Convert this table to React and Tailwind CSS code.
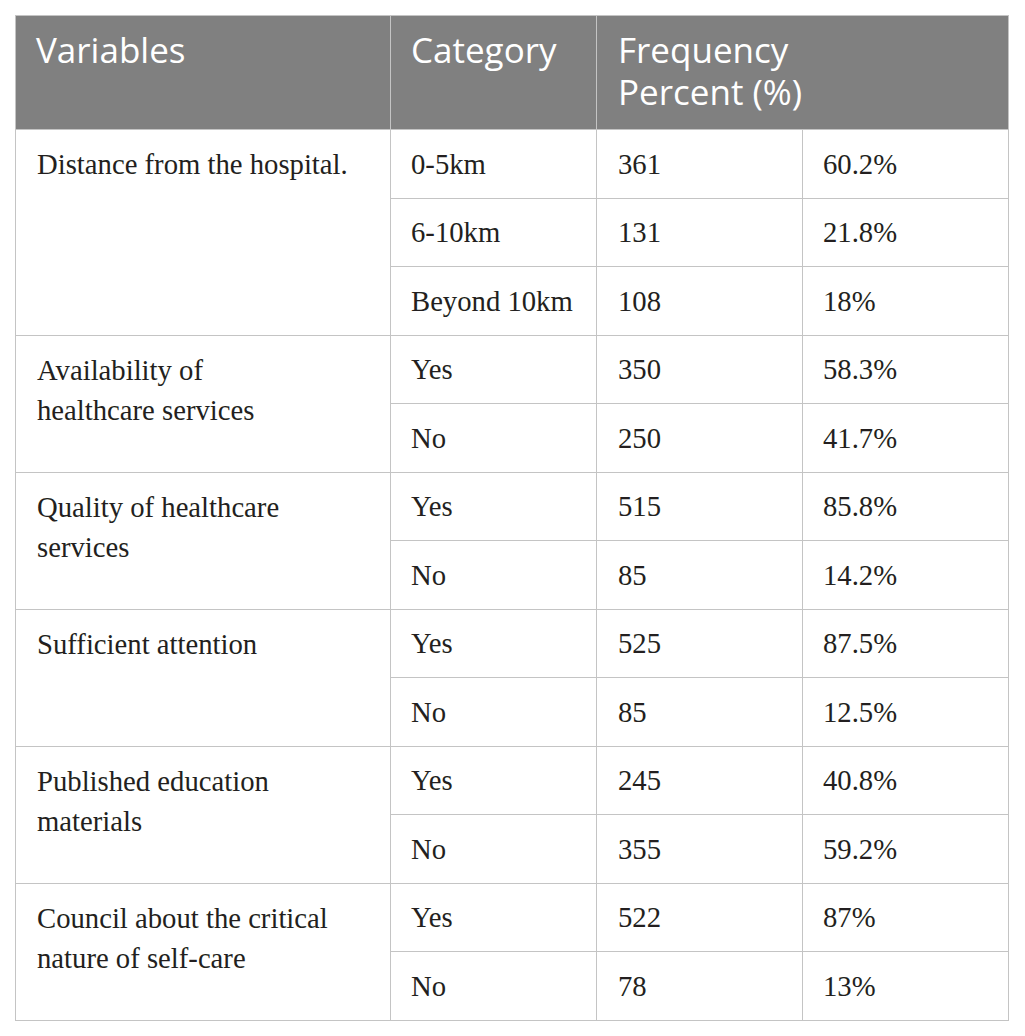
import React from "react";

const groups = [
  { v: ["Distance from the hospital."], rows: [["0-5km", "361", "60.2%"], ["6-10km", "131", "21.8%"], ["Beyond 10km", "108", "18%"]] },
  { v: ["Availability of", "healthcare services"], rows: [["Yes", "350", "58.3%"], ["No", "250", "41.7%"]] },
  { v: ["Quality of healthcare", "services"], rows: [["Yes", "515", "85.8%"], ["No", "85", "14.2%"]] },
  { v: ["Sufficient attention"], rows: [["Yes", "525", "87.5%"], ["No", "85", "12.5%"]] },
  { v: ["Published education", "materials"], rows: [["Yes", "245", "40.8%"], ["No", "355", "59.2%"]] },
  { v: ["Council about the critical", "nature of self-care"], rows: [["Yes", "522", "87%"], ["No", "78", "13%"]] },
];

export default function App() {
  return (
    <div className="bg-white w-[1025px] h-[1036px] pt-[15px] pl-[15px]">
      <table
        className="table-fixed border-collapse w-[993px] text-[#231f20]"
        style={{ fontFamily: '"Liberation Serif", "Times New Roman", serif' }}
      >
        <colgroup>
          <col className="w-[375px]" />
          <col className="w-[206px]" />
          <col className="w-[206px]" />
          <col className="w-[206px]" />
        </colgroup>
        <thead>
          <tr className="h-[114px] bg-[#808080] text-white text-[35px] leading-[42px] font-['Open_Sans',sans-serif]">
            <th className="align-top text-left font-normal pl-[20px] pt-[13px] border border-[#c4c4c4]">Variables</th>
            <th className="align-top text-left font-normal pl-[20px] pt-[13px] border border-[#c4c4c4]">Category</th>
            <th colSpan={2} className="align-top text-left font-normal pl-[21px] pt-[13px] border border-[#c4c4c4]">
              <div>Frequency</div>
              <div>Percent (%)</div>
            </th>
          </tr>
        </thead>
        <tbody className="text-[28.7px] leading-[40px]">
          {groups.map((g, gi) =>
            g.rows.map((r, ri) => (
              <tr key={gi + "-" + ri} className="h-[68.5px]">
                {ri === 0 && (
                  <td rowSpan={g.rows.length} className="align-top pt-[14px] pl-[21px] pr-[10px] border border-[#c4c4c4]">
                    {g.v.map((line, li) => (
                      <div key={li}>{line}</div>
                    ))}
                  </td>
                )}
                <td className="align-middle pl-[20px] border border-[#c4c4c4]">{r[0]}</td>
                <td className="align-middle pl-[21px] border border-[#c4c4c4]">{r[1]}</td>
                <td className="align-middle pl-[20px] border border-[#c4c4c4]">{r[2]}</td>
              </tr>
            ))
          )}
        </tbody>
      </table>
    </div>
  );
}
